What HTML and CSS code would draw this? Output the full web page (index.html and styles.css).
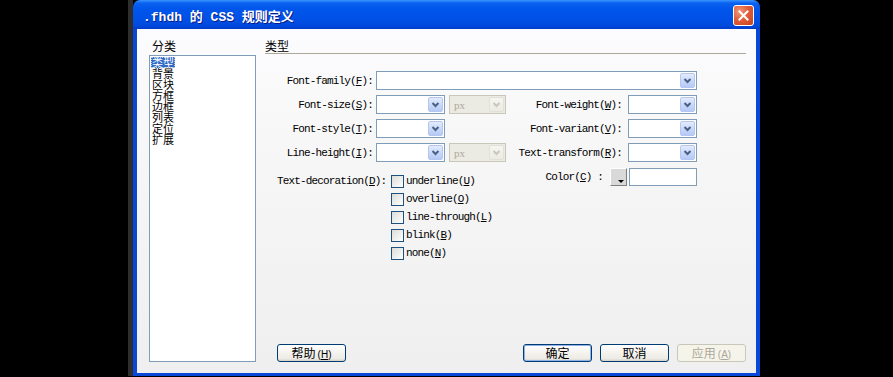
FILE: index.html
```html
<!DOCTYPE html>
<html lang="zh-CN">
<head>
<meta charset="utf-8">
<title>.fhdh 的 CSS 规则定义</title>
<link rel="stylesheet" href="styles.css">
</head>
<body>
<div class="screen">
  <div class="edge-black"></div>
  <div class="edge-gray"></div>
  <div class="window">
    <div class="titlebar">
      <span class="title">.fhdh 的 CSS 规则定义</span>
      <div class="close">
        <svg width="19" height="19" viewBox="0 0 19 19"><path d="M5.5 5.5 L13.5 13.5 M13.5 5.5 L5.5 13.5" stroke="#fff" stroke-width="2" stroke-linecap="square"/></svg>
      </div>
    </div>
    <div class="client">
      <div class="cat-col">
        <div class="cat-label">分类</div>
        <ul class="listbox">
          <li class="selected"><span>类型</span></li>
          <li><span>背景</span></li>
          <li><span>区块</span></li>
          <li><span>方框</span></li>
          <li><span>边框</span></li>
          <li><span>列表</span></li>
          <li><span>定位</span></li>
          <li><span>扩展</span></li>
        </ul>
      </div>
      <div class="panel">
        <div class="panel-head">类型</div>
        <div class="form">
          <div class="row">
            <span class="lbl">Font-family(<u>F</u>):</span>
            <div class="sel wide"><div class="arrow"><svg width="13" height="13" viewBox="0 0 13 13"><polyline points="3.5,5 6.5,8 9.5,5" fill="none" stroke="#4d6185" stroke-width="2"/></svg></div></div>
          </div>
          <div class="row">
            <span class="lbl">Font-size(<u>S</u>):</span>
            <div class="sel"><div class="arrow"><svg width="13" height="13" viewBox="0 0 13 13"><polyline points="3.5,5 6.5,8 9.5,5" fill="none" stroke="#4d6185" stroke-width="2"/></svg></div></div>
            <div class="sel unit disabled"><span class="unit-text">px</span><div class="arrow"><svg width="13" height="13" viewBox="0 0 13 13"><polyline points="3.5,5 6.5,8 9.5,5" fill="none" stroke="#c9c7ba" stroke-width="2"/></svg></div></div>
            <span class="lbl2">Font-weight(<u>W</u>):</span>
            <div class="sel"><div class="arrow"><svg width="13" height="13" viewBox="0 0 13 13"><polyline points="3.5,5 6.5,8 9.5,5" fill="none" stroke="#4d6185" stroke-width="2"/></svg></div></div>
          </div>
          <div class="row">
            <span class="lbl">Font-style(<u>T</u>):</span>
            <div class="sel"><div class="arrow"><svg width="13" height="13" viewBox="0 0 13 13"><polyline points="3.5,5 6.5,8 9.5,5" fill="none" stroke="#4d6185" stroke-width="2"/></svg></div></div>
            <div class="unit-gap"></div>
            <span class="lbl2">Font-variant(<u>V</u>):</span>
            <div class="sel"><div class="arrow"><svg width="13" height="13" viewBox="0 0 13 13"><polyline points="3.5,5 6.5,8 9.5,5" fill="none" stroke="#4d6185" stroke-width="2"/></svg></div></div>
          </div>
          <div class="row">
            <span class="lbl">Line-height(<u>I</u>):</span>
            <div class="sel"><div class="arrow"><svg width="13" height="13" viewBox="0 0 13 13"><polyline points="3.5,5 6.5,8 9.5,5" fill="none" stroke="#4d6185" stroke-width="2"/></svg></div></div>
            <div class="sel unit disabled"><span class="unit-text">px</span><div class="arrow"><svg width="13" height="13" viewBox="0 0 13 13"><polyline points="3.5,5 6.5,8 9.5,5" fill="none" stroke="#c9c7ba" stroke-width="2"/></svg></div></div>
            <span class="lbl2">Text-transform(<u>R</u>):</span>
            <div class="sel"><div class="arrow"><svg width="13" height="13" viewBox="0 0 13 13"><polyline points="3.5,5 6.5,8 9.5,5" fill="none" stroke="#4d6185" stroke-width="2"/></svg></div></div>
          </div>
        </div>
        <div class="deco">
          <div class="deco-left">
            <span class="deco-lbl">Text-decoration(<u>D</u>):</span>
            <div class="checks">
              <label class="chk"><span class="box"></span><span>underline(<u>U</u>)</span></label>
              <label class="chk"><span class="box"></span><span>overline(<u>O</u>)</span></label>
              <label class="chk"><span class="box"></span><span>line-through(<u>L</u>)</span></label>
              <label class="chk"><span class="box"></span><span>blink(<u>B</u>)</span></label>
              <label class="chk"><span class="box"></span><span>none(<u>N</u>)</span></label>
            </div>
          </div>
          <div class="deco-right">
            <span class="color-lbl">Color(<u>C</u>) :</span>
            <div class="swatch"><span class="tri"></span></div>
            <div class="color-input"></div>
          </div>
        </div>
        <div class="buttons">
          <div class="btn help">帮助<span class="acc">(<u>H</u>)</span></div>
          <div class="btn ok">确定</div>
          <div class="btn">取消</div>
          <div class="btn disabled">应用<span class="acc">(<u>A</u>)</span></div>
        </div>
      </div>
    </div>
  </div>
</div>
</body>
</html>
```
FILE: styles.css
```css
html, body {
  margin: 0;
  padding: 0;
  background: #000;
}
body {
  width: 893px;
  height: 377px;
  overflow: hidden;
  font-family: "Liberation Mono", "Noto Sans CJK SC", monospace;
}
.screen {
  display: flex;
  height: 377px;
}
.edge-black {
  width: 128px;
  flex: none;
}
.edge-gray {
  width: 5px;
  height: 376px;
  background: #2e2e2e;
  flex: none;
}
.window {
  width: 627px;
  height: 376px;
  display: flex;
  flex-direction: column;
  flex: none;
}
.titlebar {
  height: 29px;
  box-sizing: border-box;
  padding: 2px 6px 0 10px;
  display: flex;
  align-items: center;
  justify-content: space-between;
  border-radius: 7px 7px 0 0;
  background: linear-gradient(#3c95ff 0, #0a62f0 3px, #0055ea 9px, #0050e6 20px, #0048dc 26px, #003bc8 29px);
}
.title {
  color: #fff;
  font-family: "Liberation Mono", "Noto Sans CJK SC", monospace;
  font-weight: bold;
  font-size: 13px;
  white-space: pre;
  text-shadow: 1px 1px 0 #0a1a8a;
}
.close {
  width: 21px;
  height: 21px;
  box-sizing: border-box;
  border: 1px solid #fff;
  border-radius: 3px;
  background: radial-gradient(circle at 30% 30%, #f09a7c 0, #df5f3a 45%, #c5401c 100%);
  display: flex;
  align-items: center;
  justify-content: center;
}
.client {
  flex: 1;
  display: flex;
  gap: 9px;
  box-sizing: border-box;
  border: 4px solid #0848d8;
  border-top: 0;
  border-bottom-width: 3px;
  padding: 10px 10px 11px 12px;
  background: linear-gradient(#fcfcfe 0, #f6f6f6 40%, #efefef 100%);
}
.cat-col {
  width: 107px;
  display: flex;
  flex-direction: column;
  flex: none;
}
.cat-label {
  font-family: "Noto Sans CJK SC", sans-serif;
  font-size: 12px;
  line-height: 14px;
  height: 16px;
  padding-left: 3px;
}
.listbox {
  flex: 1;
  margin: 0;
  padding: 1px 0 0 1px;
  list-style: none;
  border: 1px solid #7f9db9;
  background: #fff;
}
.listbox li {
  height: 11px;
  font-family: "Noto Sans CJK SC", sans-serif;
  font-size: 11px;
  line-height: 11px;
}
.listbox li span {
  display: inline-block;
  padding: 0 1px;
  height: 11px;
  vertical-align: top;
}
.listbox li.selected span {
  background: #316ac5;
  color: #fff;
  outline: 1px dotted #b8cbe8;
  outline-offset: -1px;
}
.panel {
  flex: 1;
  display: flex;
  flex-direction: column;
}
.panel-head {
  font-family: "Noto Sans CJK SC", sans-serif;
  font-size: 12px;
  line-height: 14px;
  height: 14px;
  border-bottom: 1px solid #aca899;
}
.form {
  margin-top: 17px;
  display: flex;
  flex-direction: column;
  gap: 5px;
}
.row {
  display: flex;
  align-items: center;
  height: 19px;
}
.lbl, .lbl2, .deco-lbl, .chk, .color-lbl {
  font-family: "Liberation Mono", monospace;
  font-size: 11px;
  letter-spacing: -0.85px;
  color: #000;
  white-space: nowrap;
}
.lbl {
  width: 111px;
  box-sizing: border-box;
  padding-right: 3px;
  text-align: right;
}
.lbl2 {
  width: 122px;
  box-sizing: border-box;
  padding-right: 6px;
  text-align: right;
}
.sel {
  width: 69px;
  height: 19px;
  box-sizing: border-box;
  border: 1px solid #7f9db9;
  background: #fff;
  display: flex;
  align-items: center;
  justify-content: flex-end;
  padding-right: 1px;
}
.sel.wide {
  width: 321px;
}
.sel.unit {
  width: 57px;
  margin-left: 4px;
  justify-content: space-between;
}
.unit-gap {
  width: 61px;
}
.arrow {
  width: 15px;
  height: 15px;
  box-sizing: border-box;
  border: 1px solid #b4c7f0;
  border-radius: 2px;
  background: linear-gradient(#e3ecfe, #c6d6f9 60%, #b5c9f6);
  display: flex;
  align-items: center;
  justify-content: center;
}
.sel.disabled {
  border-color: #c9c7ba;
  background: #ebebe4;
}
.sel.disabled .arrow {
  border-color: #e2e1d8;
  background: linear-gradient(#f6f6f1, #ebeae3);
}
.unit-text {
  padding-left: 4px;
  font-family: "Liberation Serif", serif;
  font-size: 11px;
  color: #aca899;
}
.deco {
  margin-top: 6px;
  display: flex;
}
.deco-left {
  width: 241px;
  box-sizing: border-box;
  padding-left: 12px;
  padding-top: 7px;
  display: flex;
  align-items: flex-start;
}
.deco-lbl {
  width: 114px;
  height: 13px;
  line-height: 13px;
  flex: none;
}
.checks {
  display: flex;
  flex-direction: column;
  gap: 5px;
}
.chk {
  display: flex;
  align-items: center;
  gap: 2px;
  height: 13px;
  line-height: 13px;
}
.box {
  width: 13px;
  height: 13px;
  box-sizing: border-box;
  border: 1px solid #1c5180;
  background: linear-gradient(135deg, #dcdcd7, #ffffff);
  flex: none;
}
.deco-right {
  display: flex;
  align-items: center;
  height: 18px;
}
.color-lbl {
  width: 104px;
  box-sizing: border-box;
  padding-right: 7px;
  text-align: right;
}
.swatch {
  width: 17px;
  height: 18px;
  box-sizing: border-box;
  border: 1px solid;
  border-color: #fff #808080 #808080 #fff;
  background: #d9d9d9;
  position: relative;
  margin-right: 2px;
}
.tri {
  position: absolute;
  right: 2px;
  bottom: 2px;
  width: 0;
  height: 0;
  border-left: 3px solid transparent;
  border-right: 3px solid transparent;
  border-top: 3px solid #000;
}
.color-input {
  width: 68px;
  height: 18px;
  box-sizing: border-box;
  border: 1px solid #7f9db9;
  background: #fff;
}
.buttons {
  margin-top: auto;
  display: flex;
  gap: 8px;
  height: 18px;
}
.btn {
  width: 69px;
  height: 18px;
  box-sizing: border-box;
  border: 1px solid #003c74;
  border-radius: 3px;
  background: linear-gradient(#ffffff 0, #f4f3ee 50%, #ecebe6 85%, #d6d0c5 100%);
  font-family: "Noto Sans CJK SC", sans-serif;
  font-size: 12px;
  line-height: 16px;
  text-align: center;
  color: #000;
}
.btn.help {
  margin-left: 12px;
  margin-right: auto;
}
.btn.ok {
  box-shadow: inset 0 0 0 1px #8fb2e8;
}
.btn.disabled {
  border-color: #c9c7ba;
  background: #f5f4ea;
  color: #aca899;
}
.acc {
  font-family: "Liberation Sans", sans-serif;
  font-size: 10px;
  margin-left: 2px;
}
```
